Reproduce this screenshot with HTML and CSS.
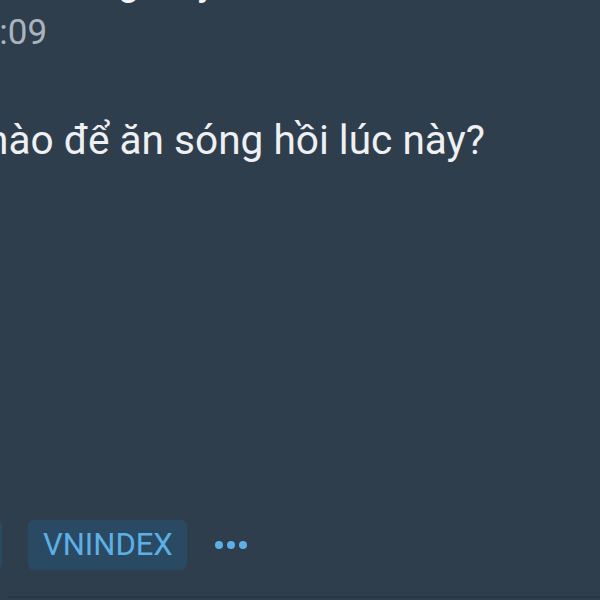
FILE: index.html
```html
<!DOCTYPE html>
<html lang="vi">
<head>
<meta charset="utf-8">
<link rel="stylesheet" href="styles.css">
</head>
<body>
<div class="post">
  <div class="author"><span>Hoàng Duy</span></div>
  <div class="time">14:09</div>
  <p class="content">nào để ăn sóng hồi lúc này?</p>
  <div class="tags">
    <span class="tag tag-cut">VN30</span>
    <span class="tag">VNINDEX</span>
    <span class="more"><i></i><i></i><i></i></span>
  </div>
</div>
<div class="divider"></div>
</body>
</html>
```
FILE: styles.css
```css
html, body {
  margin: 0;
  padding: 0;
  width: 600px;
  height: 600px;
  overflow: hidden;
  background: #2f3e4c;
  font-family: Roboto, "Noto Sans", sans-serif;
}
.post {
  height: 596px;
  display: flex;
  flex-direction: column;
}
.author {
  flex: none;
  height: 3px;
  overflow: hidden;
  color: #f2f4f6;
  font-size: 36px;
  font-weight: 500;
  margin-left: 33px;
  white-space: nowrap;
  word-spacing: 6px;
}
.author span {
  display: block;
  line-height: 42px;
  margin-top: -38px;
}
.time {
  margin-top: 9px;
  margin-left: -40px;
  color: #aab4bf;
  font-size: 35px;
  line-height: 41px;
}
.content {
  margin: 63px 0 0 -14px;
  color: #eef0f3;
  font-size: 40.6px;
  line-height: 48px;
  white-space: nowrap;
}
.tags {
  margin-top: auto;
  margin-bottom: 26px;
  display: flex;
  align-items: center;
  gap: 26px;
  margin-left: -60px;
}
.tag {
  height: 50px;
  box-sizing: border-box;
  padding: 0 14px 0 15px;
  border-radius: 6px;
  background: #2a4a63;
  color: #5cb0e6;
  font-size: 31px;
  line-height: 50px;
}
.tag-cut {
  width: 62px;
  overflow: hidden;
  color: transparent;
}
.more {
  display: flex;
  gap: 4px;
  margin-left: 2px;
}
.more i {
  width: 8px;
  height: 8px;
  border-radius: 50%;
  background: #5cb0e6;
}
.divider {
  height: 2px;
  margin-left: 8px;
  background: #2a3742;
}
```
